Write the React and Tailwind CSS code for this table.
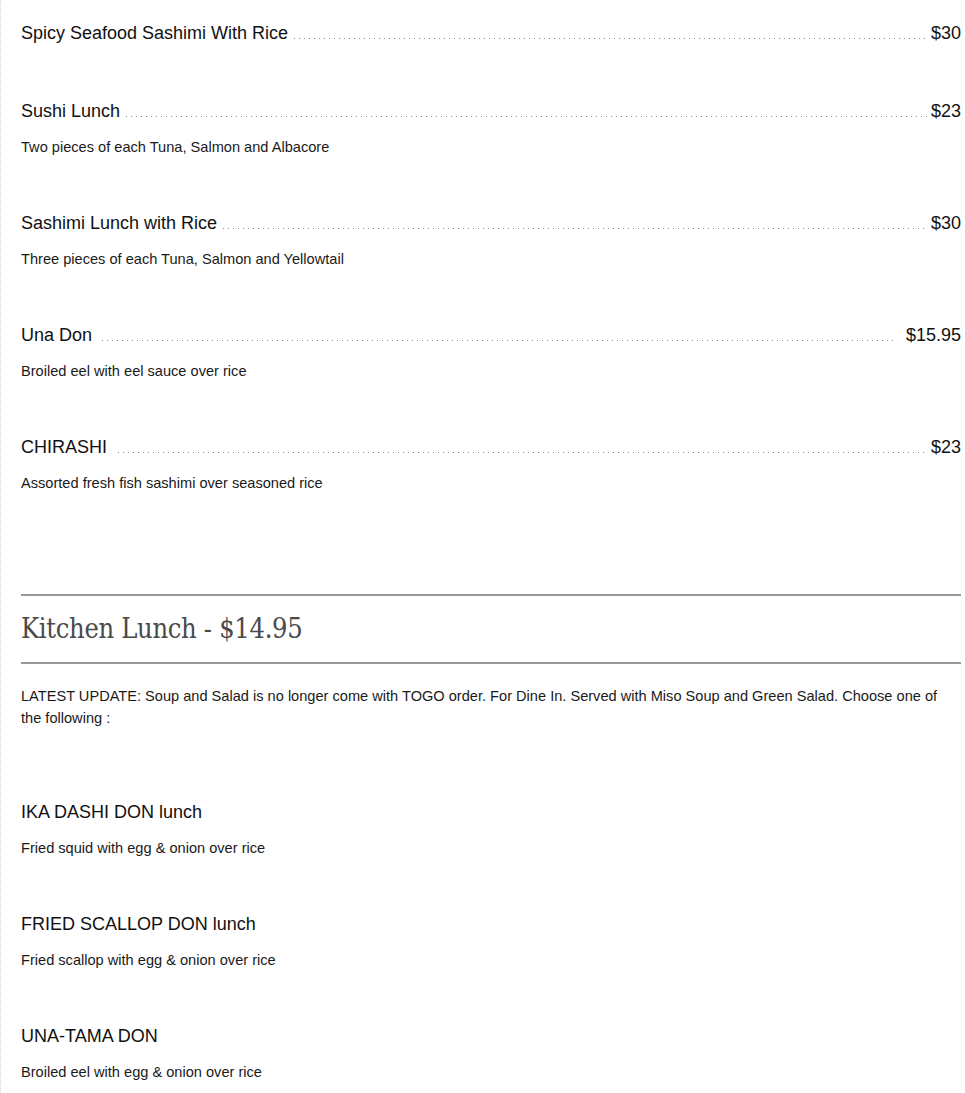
import React from "react";

const sans = { fontFamily: '"Liberation Sans", Arial, sans-serif' };

function Item({ title, price, desc, gapL = "ml-[6px]", gapR = "mr-[3px]" }) {
  return (
    <div className={desc ? "mb-[53px]" : "mb-[54px]"}>
      <div className="flex items-end text-[18px] leading-6 text-[#111]">
        <span className="whitespace-nowrap">{title}</span>
        {price && (
          <>
            <span
              className={`flex-1 h-px mb-[6px] ${gapL} ${gapR} bg-[linear-gradient(to_right,#8a8a8a_1px,transparent_1px)] bg-[length:5px_1px] bg-repeat-x`}
            />
            <span className="whitespace-nowrap">{price}</span>
          </>
        )}
      </div>
      {desc && (
        <p className="mt-[13px] text-[14.6px] leading-[22px] text-[#1a1a1a]">{desc}</p>
      )}
    </div>
  );
}

export default function App() {
  return (
    <div
      className="min-h-[1093px] bg-white border-l border-dotted border-[#cfcfcf] pl-5 pr-1 pt-[21px]"
      style={sans}
    >
      <Item title="Spicy Seafood Sashimi With Rice" price="$30" />
      <Item
        title="Sushi Lunch"
        price="$23"
        desc="Two pieces of each Tuna, Salmon and Albacore"
      />
      <Item
        title="Sashimi Lunch with Rice"
        price="$30"
        desc="Three pieces of each Tuna, Salmon and Yellowtail"
      />
      <Item
        title="Una Don"
        price="$15.95"
        desc="Broiled eel with eel sauce over rice"
        gapL="ml-[10px]"
        gapR="mr-[9px]"
      />
      <Item
        title="CHIRASHI"
        price="$23"
        desc="Assorted fresh fish sashimi over seasoned rice"
        gapL="ml-[11px]"
        gapR="mr-[3px]"
      />

      <div className="mt-[100px] border-t-2 border-[#999]" />
      <h2
        className="py-[10px] text-[27px] leading-[46px] text-[#4a4a4a] tracking-[-0.3px]"
        style={{ fontFamily: '"DejaVu Serif", "Liberation Serif", serif', fontStretch: "condensed", fontWeight: 300 }}
      >
        Kitchen Lunch - $14.95
      </h2>
      <div className="border-t-2 border-[#999]" />

      <p className="mt-[21px] text-[14.6px] leading-[22px] text-[#1a1a1a]">
        LATEST UPDATE: Soup and Salad is no longer come with TOGO order. For Dine In. Served with Miso Soup and Green Salad. Choose one of the following :
      </p>

      <div className="mt-[71px]">
        <Item title="IKA DASHI DON lunch" desc="Fried squid with egg & onion over rice" />
        <Item title="FRIED SCALLOP DON lunch" desc="Fried scallop with egg & onion over rice" />
        <Item title="UNA-TAMA DON" desc="Broiled eel with egg & onion over rice" />
      </div>
    </div>
  );
}
